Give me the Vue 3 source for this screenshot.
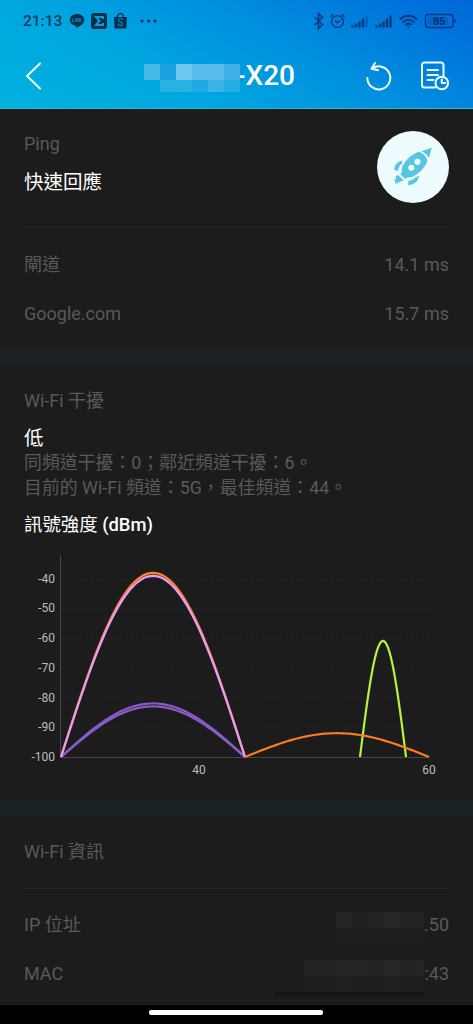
<script setup>
const pings = [
    { label: '閘道', value: '14.1 ms' },
    { label: 'Google.com', value: '15.7 ms' },
];

const info = [
    {
        label: 'IP 位址',
        tail: '.50',
        cells: ['#232625', '#1f2221', '#212423', '#242725', '#202322', '#212423', '#1e1f1f', '#1f1f1f', '#1e1e1e', '#1f1f1f', '#1e1e1e', '#1e1e1e'],
        width: 88,
    },
    {
        label: 'MAC',
        tail: ':43',
        cells: ['#222424', '#222424', '#242525', '#242525', '#202322', '#262727', '#202322', '#232524', '#1f1f1f', '#1f1f1f', '#202020', '#1f1f1f', '#1f1f1f', '#202020', '#1f1f1f', '#1f1f1f'],
        width: 120,
    },
];

const titleCells = ['#45b9e6', '#1aa0df', '#6cc8ec', '#58bdea', '#58bdea', '#40b0e6', 'transparent', '#28b2e4', '#28b2e4', '#1eaae2', '#38b5e6', '#26aee4'];

// 圖表座標：頻道 28 ~ 60，強度 -100 ~ -40
const left = 61;
const base = 206;
const ticks = [-40, -50, -60, -70, -80, -90, -100];

function px(channel) {
    return left + (channel - 28) * 11.5;
}

function py(dbm) {
    return base - (dbm + 100) * 2.975;
}

function curve(from, to, peak) {
    const points = [];
    for (let i = 0; i <= 60; i++) {
        const t = i / 60;
        const x = px(from + (to - from) * t);
        const y = py(-100 + (peak + 100) * Math.sin(Math.PI * t));
        points.push(x.toFixed(2) + ',' + y.toFixed(2));
    }
    return points.join(' ');
}

const networks = [
    { color: '#8a5ac8', points: curve(28, 44, -82) },
    { color: '#8a5ac8', points: curve(28, 44, -83) },
    { color: '#ff8124', points: curve(28, 44, -38.1) },
    { color: '#e49bfa', points: curve(28, 44, -39.1) },
    { color: '#b4f43c', points: curve(54, 58, -61) },
    { color: '#ff7a26', points: curve(44, 60, -92) },
];
</script>

<template>
    <div class="screen">
        <header class="top">
            <div class="status">
                <span class="time">21:13</span>
                <svg class="apps" width="100" height="18" viewBox="0 0 100 18">
                    <path d="M8 2C3.800 2 .8 4.600.8 8c0 3 2.600 5.200 6 5.700.9.200.5 1.500.5 2.300 3.300-1.500 8-4.500 8-8C15.300 4.600 12.200 2 8 2z" />
                    <text x="3" y="9.600" class="line-text">LINE</text>
                    <rect x="22" y="1" width="16" height="16" rx="3" />
                    <path d="M34 7V5h-7l3.500 4-3.500 4h7v-2" class="sigma" />
                    <path d="M45 5h13l-.6 11.500H45.600z" />
                    <path d="M48.500 5c0-4.500 6-4.500 6 0" class="handle" />
                    <text x="48.500" y="14" class="bag-text">S</text>
                    <circle cx="73" cy="9" r="1.600" />
                    <circle cx="79.500" cy="9" r="1.600" />
                    <circle cx="86" cy="9" r="1.600" />
                </svg>
                <svg class="system" width="144" height="18" viewBox="0 0 144 18">
                    <path d="M1.500 5l8 7.500L5.500 16.500V1.500l4 4L1.500 13" class="bluetooth" />
                    <g>
                        <circle cx="24.500" cy="9.500" r="5.900" />
                        <path d="M22 8.500l2.500 2.200L27 8.500M17.500 5l3-3M31.500 5l-3-3" />
                    </g>
                    <path d="M39.500 15.500v-2M43 15.500v-4M46.500 15.500v-6M50 15.500v-9" class="bar" />
                    <path d="M53.500 15.500v-12" class="bar dim" />
                    <path d="M63.500 15.500v-2M67 15.500v-4M70.500 15.500v-6M74 15.500v-9M77.500 15.500v-12" class="bar" />
                    <path d="M87 7.500c5-5 12-5 17 0M89.700 10.500c3.500-3.400 8-3.400 11.600 0M92.500 13c1.800-1.700 4.200-1.700 6 0" class="wifi" />
                    <path d="M94 14.200h3l-1.500 1.800z" class="solid" />
                    <rect x="112.500" y="2.500" width="27.500" height="13" rx="3" />
                    <rect x="115" y="5" width="20" height="8" rx="1" class="charge" />
                    <path d="M142 7v4" />
                    <text x="120" y="13" class="level">85</text>
                </svg>
            </div>
            <div class="nav">
                <svg class="back" width="16" height="28" viewBox="0 0 16 28">
                    <path d="M15 1.500L2 14l13 12.500" />
                </svg>
                <h1>
                    <span class="mosaic title-mosaic">
                        <i v-for="(c, i) in titleCells" :key="i" :style="{ background: c }"></i>
                    </span>
                    <span class="model">-X20</span>
                </h1>
                <svg class="refresh" width="28" height="30" viewBox="0 0 28 30">
                    <path d="M2.300 17a11.500 11.500 0 1 0 5.300-9.800M10 2L6.500 7.700l6.500 1.600" />
                </svg>
                <svg class="report" width="30" height="30" viewBox="0 0 30 30">
                    <path d="M15 26.500H4.500a2.500 2.500 0 0 1-2.500-2.500V4a2.500 2.500 0 0 1 2.500-2.500H21A2.500 2.500 0 0 1 23.500 4v12M7.500 9h10.500M7.500 14h10.500M7.500 19h6" />
                    <circle cx="21.800" cy="22" r="6.300" />
                    <path d="M21.800 18.500V22h3.500" />
                </svg>
            </div>
        </header>

        <section class="ping">
            <div class="summary">
                <div>
                    <p class="label">Ping</p>
                    <p class="result">快速回應</p>
                </div>
                <svg class="rocket" width="72" height="72" viewBox="0 0 72 72">
                    <circle cx="36" cy="36" r="36" fill="#ecfcff" />
                    <g fill="#58c6e2">
                        <path d="M54.700 16.700l-10.200 3.500c3.500 1.500 5.800 3.700 7.300 7z" />
                        <path d="M42 20.800c4.500 1.700 7.200 4.500 8.400 8.700-2 6.500-7 12-14.400 16.200l-6 1-2 1-4.500-4.300 1-2.200.7-5.700C29 28.500 35 23 42 20.800z" />
                        <path d="M25.300 29.500c-5 1-7.800 4.600-8 9.500l3.700 1c.2-3.200 1.500-5.800 4-7.500z" />
                        <path d="M42 45c-.6 5.300-5 8.800-10.700 9.200v-4.400c3.200 0 5.400-1.300 7-3.500z" />
                        <path d="M21.500 44.300l5.200 5.200-2.500.5-1.300 1.200-2.200.2-2.700 2.100.7-3.200-2-.5 2.300-2.200-.5-2.500z" />
                    </g>
                    <circle cx="40.500" cy="30.800" r="3.100" fill="#ecfcff" />
                    <circle cx="34.300" cy="36.800" r="3" fill="#ecfcff" />
                </svg>
            </div>
            <div class="rule"></div>
            <div v-for="p in pings" :key="p.label" class="row">
                <span>{{ p.label }}</span>
                <span>{{ p.value }}</span>
            </div>
        </section>

        <section class="interference">
            <p class="label">Wi-Fi 干擾</p>
            <p class="result low">低</p>
            <p class="detail">同頻道干擾：0；鄰近頻道干擾：6。<br>目前的 Wi-Fi 頻道：5G，最佳頻道：44。</p>
            <p class="chart-title">訊號強度 <b>(dBm)</b></p>
            <svg class="chart" width="473" height="234" viewBox="0 0 473 234">
                <line v-for="t in ticks.slice(0, 6)" :key="t" :x1="left" x2="429" :y1="py(t) + 0.5" :y2="py(t) + 0.5" class="grid" />
                <path d="M60.500 4v202.500H429" class="axis" />
                <text v-for="t in ticks" :key="'t' + t" x="55" :y="py(t) + 4" text-anchor="end">{{ t }}</text>
                <text :x="px(40)" y="222.500" text-anchor="middle">40</text>
                <text :x="px(60)" y="222.500" text-anchor="middle">60</text>
                <polyline v-for="(n, i) in networks" :key="'n' + i" :points="n.points" :stroke="n.color" class="wave" />
            </svg>
        </section>

        <section class="info">
            <p class="label">Wi-Fi 資訊</p>
            <div class="rule"></div>
            <div v-for="r in info" :key="r.label" class="row">
                <span>{{ r.label }}</span>
                <span class="masked">
                    <span class="mosaic" :style="{ width: r.width + 'px', gridTemplateColumns: `repeat(${r.cells.length / 2}, 16px)` }">
                        <i v-for="(c, i) in r.cells" :key="i" :style="{ background: c }"></i>
                    </span>{{ r.tail }}
                </span>
            </div>
            <div class="smudge"></div>
        </section>

        <footer class="home"><span></span></footer>
    </div>
</template>

<style>
body {
    background: #1c1c1c;
}
</style>

<style scoped>
.screen {
    display: flex;
    flex-direction: column;
    width: 473px;
    height: 1024px;
    overflow: hidden;
    background: #1c1c1c;
    color: #595959;
    font-family: Roboto, "Noto Sans CJK TC", sans-serif;
    font-size: 18px;
}

p,
h1 {
    margin: 0;
}

svg {
    display: block;
    flex: none;
}

.top {
    height: 109px;
    box-sizing: border-box;
    border-bottom: 1px solid #35b4d0;
    background: linear-gradient(28deg, #00b2de 0%, #00a4e0 36%, #008ede 62%, #0066da 100%);
}

.status {
    display: flex;
    align-items: center;
    height: 42px;
    padding: 0 16px 0 23px;
}

.time {
    width: 46px;
    color: #043d5f;
    font-size: 15.5px;
    font-weight: 500;
}

.apps {
    fill: #04304c;
}

.line-text {
    fill: #0b8ec9;
    font-size: 4.5px;
    font-weight: 700;
}

.sigma {
    fill: none;
    stroke: #0a9ada;
    stroke-width: 2;
}

.handle {
    fill: none;
    stroke: #04304c;
    stroke-width: 1.3;
}

.bag-text {
    fill: #0b8ec9;
    font-size: 10px;
}

.system {
    margin-left: auto;
    fill: none;
    stroke: #053b7c;
    stroke-width: 1.4;
}

.system .bluetooth {
    stroke-width: 1.6;
}

.system .bar {
    stroke-width: 2.4;
}

.system .dim {
    opacity: 0.4;
}

.system .wifi {
    stroke-width: 2;
}

.system .solid {
    fill: #053b7c;
    stroke: none;
}

.system .charge {
    fill: #053b7c;
    opacity: 0.25;
    stroke: none;
}

.level {
    fill: #053372;
    stroke: none;
    font-size: 11px;
    font-weight: 700;
}

.nav {
    display: flex;
    align-items: center;
    height: 66px;
    padding: 1px 23px 0 25px;
    box-sizing: border-box;
    fill: none;
    stroke: #effcff;
    stroke-width: 2;
    stroke-linecap: round;
    stroke-linejoin: round;
}

h1 {
    display: flex;
    align-items: center;
    width: 223px;
    margin-left: 103px;
    color: #fff;
    font-size: 28px;
    font-weight: 500;
    line-height: 28px;
    white-space: nowrap;
}

.model {
    margin-left: -4px;
}

.report {
    margin-left: 27px;
}

.mosaic {
    display: grid;
    grid-template-columns: repeat(6, 16px);
    grid-auto-rows: 16px;
    flex: none;
    overflow: hidden;
}

/* 馬賽克蓋住連字號的左半邊 */
.title-mosaic {
    z-index: 1;
    width: 96px;
    grid-template-rows: 16px 12px;
    margin-top: 4px;
}

.label {
    height: 24px;
    line-height: 24px;
}

.result {
    color: #fff;
    font-size: 19.5px;
    line-height: 28px;
}

.rule {
    height: 1px;
    background: #242424;
}

.row {
    display: flex;
    align-items: center;
    justify-content: space-between;
    height: 48.5px;
    line-height: 24px;
}

.ping {
    height: 255px;
    padding: 22px 24px 0;
    box-sizing: border-box;
    border-bottom: 15px solid #1a2224;
}

.summary {
    display: flex;
    justify-content: space-between;
    height: 95px;
}

.summary .label {
    margin-top: 1px;
}

.summary .result {
    margin-top: 13px;
}

.ping .rule {
    margin-bottom: 14px;
}

.interference {
    height: 451px;
    padding: 25px 24px 0;
    box-sizing: border-box;
    border-bottom: 15px solid #1a2224;
}

.low {
    margin-top: 12px;
}

.detail {
    margin-top: -2px;
    font-size: 17.9px;
    line-height: 24.5px;
    white-space: nowrap;
}

.chart-title {
    margin-top: 12px;
    color: #fff;
    font-size: 18.4px;
    line-height: 26px;
}

.chart-title b {
    font-weight: 500;
}

.chart {
    margin: 13px 0 0 -24px;
}

.chart text {
    fill: #bcbcbc;
    font-size: 12px;
}

.grid {
    stroke: #272727;
    stroke-dasharray: 2 3;
}

.axis {
    fill: none;
    stroke: #464646;
}

.wave {
    fill: none;
    stroke-width: 2.2;
}

.info {
    height: 190px;
    padding: 25px 24px 0;
    box-sizing: border-box;
}

.info .rule {
    margin: 24px 0 12px;
}

.masked {
    display: flex;
    align-items: center;
}

.masked .mosaic {
    height: 32px;
    margin-top: 5px;
}

.smudge {
    width: 150px;
    height: 4px;
    margin: -6px 25px 0 auto;
    background: #161616;
}

.home {
    flex: 1;
    display: flex;
    justify-content: center;
    padding: 5px 1px 0 0;
    background: #000;
}

.home span {
    width: 174px;
    height: 4.5px;
    border-radius: 2px;
    background: #fff;
}
</style>
